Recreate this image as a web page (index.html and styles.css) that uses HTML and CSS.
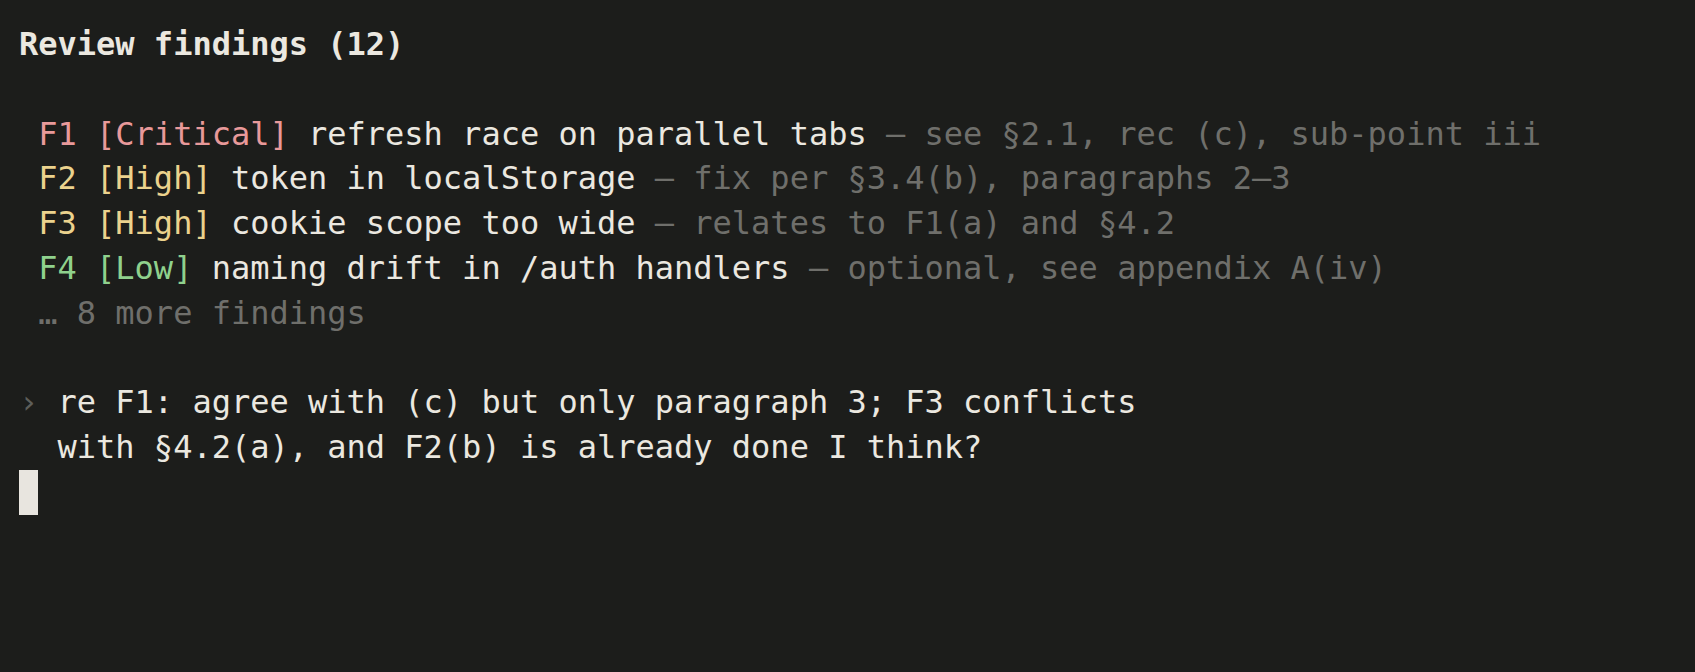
FILE: index.html
```html
<!DOCTYPE html>
<html lang="en">
<head>
<meta charset="utf-8">
<title>Review findings</title>
<link rel="stylesheet" href="styles.css">
</head>
<body>
<main class="term">
  <div class="line title">Review findings (12)</div>
  <div class="line blank"></div>
  <ul class="findings">
    <li class="line"> <span class="sev crit">F1 [Critical]</span> refresh race on parallel tabs <span class="dim">— see §2.1, rec (c), sub-point iii</span></li>
    <li class="line"> <span class="sev high">F2 [High]</span> token in localStorage <span class="dim">— fix per §3.4(b), paragraphs 2–3</span></li>
    <li class="line"> <span class="sev high">F3 [High]</span> cookie scope too wide <span class="dim">— relates to F1(a) and §4.2</span></li>
    <li class="line"> <span class="sev low">F4 [Low]</span> naming drift in /auth handlers <span class="dim">— optional, see appendix A(iv)</span></li>
    <li class="line dim"> … 8 more findings</li>
  </ul>
  <div class="line blank"></div>
  <div class="prompt">
    <span class="chevron">›</span>
    <div class="input">
      <div class="line">re F1: agree with (c) but only paragraph 3; F3 conflicts</div>
      <div class="line">with §4.2(a), and F2(b) is already done I think?</div>
    </div>
  </div>
  <div class="line"><span class="cursor"></span></div>
</main>
</body>
</html>
```

FILE: styles.css
```css
html, body {
  margin: 0;
  padding: 0;
  background: #1c1d1b;
}

body {
  width: 1695px;
  height: 672px;
  overflow: hidden;
}

.term {
  padding: 22px 19px;
  font-family: "DejaVu Sans Mono", "Liberation Mono", monospace;
  font-size: 32px;
  line-height: 44.8px;
  color: #ebe8e0;
}

.line {
  height: 44.8px;
  white-space: pre;
}

.title {
  font-weight: bold;
}

.findings {
  list-style: none;
  margin: 0;
  padding: 0;
}

.crit { color: #e8999a; }
.high { color: #ebd28d; }
.low  { color: #8fd18d; }
.dim  { color: #6f6f6b; }

.prompt {
  display: flex;
}

.chevron {
  width: 2ch;
  flex: none;
  color: #5d5e5a;
}

.input {
  flex: 1;
}

.cursor {
  display: inline-block;
  width: 1ch;
  height: 44.8px;
  vertical-align: top;
  background: #e8e5df;
}
```
